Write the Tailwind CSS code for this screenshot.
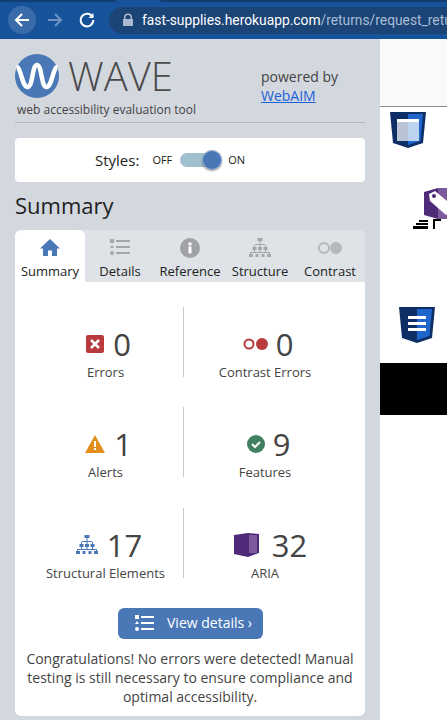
<!DOCTYPE html>
<html lang="en">
<head>
<meta charset="utf-8">
<title>WAVE</title>
<script src="https://cdn.jsdelivr.net/npm/@tailwindcss/browser@4"></script>
</head>
<body class="w-[447px] h-[720px] overflow-hidden bg-white font-['Open_Sans',sans-serif]">
<header class="h-[39px] bg-[#17539b] overflow-hidden">
  <div class="flex h-[2px]">
    <div class="w-[116px] bg-[#123d73] rounded-br-[2px]"></div>
    <div class="w-[44px]"></div>
    <div class="flex-1 bg-[#123d73] rounded-bl-[2px]"></div>
  </div>
  <div class="flex items-center h-[37px] pb-[1px]">
    <div class="w-7 h-7 ml-2 rounded-full bg-[#3a6ba9] flex items-center justify-center shrink-0">
      <svg width="16" height="16" viewBox="0 0 16 16" fill="none" stroke="#fff" stroke-width="2"><path d="M15 8H2M8 2 2 8l6 6"/></svg>
    </div>
    <svg class="ml-[11px] shrink-0" width="16" height="16" viewBox="0 0 16 16" fill="none" stroke="#6f92c0" stroke-width="2"><path d="M1 8h13M8 2l6 6-6 6"/></svg>
    <svg class="ml-[16px] shrink-0" width="16" height="16" viewBox="0 0 16 16" fill="none" stroke="#fff" stroke-width="2"><path d="M13.500 5A6.300 6.300 0 1 0 14.300 8"/><path d="M14.500 1v5h-5" fill="#fff" stroke="none"/></svg>
    <div class="ml-[14px] h-[27px] w-[400px] shrink-0 rounded-full bg-[#1b4477] flex items-center pl-[13px]">
      <svg width="12" height="14" viewBox="0 0 12 14" fill="#a9b9cf"><path d="M2 6V4.500a4 4 0 0 1 8 0V6h1v7H1V6zm1.500 0h5V4.500a2.500 2.500 0 0 0-5 0z"/></svg>
      <p class="ml-[8px] whitespace-nowrap font-['Roboto',sans-serif] text-[13.800px] leading-[27px] text-[#a9bdd6]"><span class="text-white">fast-supplies.herokuapp.com</span>/returns/request_retu</p>
    </div>
  </div>
</header>
<div class="flex h-[681px]">
  <aside class="w-[380px] shrink-0 bg-[#d3d7de] px-[15px] pt-[15px] text-[#444]">
    <div class="flex h-[69px] border-b border-[#b4b7bb]">
      <div class="w-[246px]">
        <div class="flex items-center h-[44px]">
          <svg width="44" height="44" viewBox="0 0 44 44"><circle cx="22" cy="22" r="22" fill="#4a78b6"/><path d="M1.500 13C6 13 7 33 12.500 33 18 33 17 11 22 11 27 11 26 33 31.500 33 37 33 38 13 42.500 13" fill="none" stroke="#fff" stroke-width="4.500"/></svg>
          <span class="ml-[9px] text-[40px] leading-[44px] font-light text-[#4a4a4a]">WAVE</span>
        </div>
        <p class="ml-[2px] mt-[3px] text-[12px] leading-[17px] whitespace-nowrap">web accessibility evaluation tool</p>
      </div>
      <div class="pt-[13px] text-[14px] leading-[19px]">
        <p>powered by</p>
        <a href="#" class="text-[#1a62d8] underline">WebAIM</a>
      </div>
    </div>
    <div class="mt-[15px] h-[44px] bg-white rounded-[4px] flex items-center pl-[80px] text-[#222]">
      <span class="text-[15px]">Styles:</span>
      <span class="ml-[13px] text-[11px]">OFF</span>
      <div class="relative ml-[8px] w-[40px] h-[14px] rounded-l-full bg-[#9fc0cd]">
        <div class="absolute -right-[2px] -top-[3px] w-5 h-5 rounded-full bg-[#4a78b6] shadow-[0_1px_2px_rgba(0,0,0,.4)] border border-white/40"></div>
      </div>
      <span class="ml-[8px] text-[11px]">ON</span>
    </div>
    <h2 class="mt-[7px] h-[41px] text-[22px] leading-[32px] text-[#222]">Summary</h2>
    <div class="bg-[#dfe2e7] rounded-t-[6px] grid grid-cols-5 h-[52px] text-[13px] text-[#222] text-center">
      <div class="bg-white rounded-t-[6px] pt-[8px]">
        <svg class="mx-auto" width="20" height="20" viewBox="0 0 20 20" fill="#4a78b6"><path d="M10 1 0 10.500h3V18h5v-5.500h4V18h5v-7.500h3z"/></svg>
        <p class="mt-[3px] leading-[20px]">Summary</p>
      </div>
      <div class="pt-[8px]">
        <svg class="mx-auto" width="20" height="20" viewBox="0 0 20 20" fill="#a4a6a9"><path d="M0 1h4v4H0zM6 2h14v2H6zM2 7l2 3H0zM6 8h14v2H6zM2 13a2 2 0 1 1 0 4 2 2 0 0 1 0-4zM6 14h14v2H6z"/></svg>
        <p class="mt-[3px] leading-[20px]">Details</p>
      </div>
      <div class="pt-[8px]">
        <svg class="mx-auto" width="20" height="20" viewBox="0 0 20 20"><circle cx="10" cy="10" r="10" fill="#a0a2a5"/><rect x="8.500" y="8.500" width="3" height="7" fill="#fff"/><rect x="8.500" y="4.500" width="3" height="3" fill="#fff"/></svg>
        <p class="mt-[3px] leading-[20px]">Reference</p>
      </div>
      <div class="pt-[8px]">
        <svg class="mx-auto" width="22" height="20" viewBox="0 0 22 20" fill="#a4a6a9"><path d="M8.500 0h5v3h-5zM10.500 3h1v3h-1zM6 6h10v1H6zM5 7h1v2H5zM16 7h1v2h-1zM10.500 7h1v2h-1zM3.500 9h4v3h-4zM9 9h4v3H9zM14.500 9h4v3h-4zM5 12h1v3H5zM16 12h1v3h-1zM10.500 12h1v3h-1zM1 14h20v1H1zM1 15h1v1H1zM20 15h1v1h-1zM0 16h4v3H0zM6.500 16h3v3h-3zM12.500 16h3v3h-3zM18 16h4v3h-4z"/></svg>
        <p class="mt-[3px] leading-[20px]">Structure</p>
      </div>
      <div class="pt-[8px]">
        <svg class="mx-auto" width="26" height="20" viewBox="0 0 26 20"><circle cx="7" cy="10" r="5" fill="none" stroke="#b6b8bb" stroke-width="2"/><circle cx="19" cy="10" r="6" fill="#b6b8bb"/></svg>
        <p class="mt-[3px] leading-[20px]">Contrast</p>
      </div>
    </div>
    <div class="bg-white h-[434px] rounded-b-[6px] pt-[25px] pl-[10px] text-[#444]">
      <div class="grid grid-cols-[160px_160px] gap-y-[30px] h-[271px]">
        <div class="h-[70px] w-[159px] border-r border-[#c8c8c8] text-center pt-[15px]">
          <div class="flex items-center justify-center gap-[9px] h-[44px] pl-[9px]">
            <svg width="18" height="18" viewBox="0 0 18 18"><rect width="18" height="18" rx="2" fill="#b83a3a"/><path d="M5 5l8 8M13 5l-8 8" stroke="#fff" stroke-width="2.500"/></svg>
            <span class="text-[31px] leading-[44px]">0</span>
          </div>
          <p class="-mt-[3px] pl-[3px] text-[13px] leading-[18px]">Errors</p>
        </div>
        <div class="h-[70px] text-center pt-[15px]">
          <div class="flex items-center justify-center gap-[7px] h-[44px] pl-[6px]">
            <svg width="26" height="14" viewBox="0 0 26 14"><circle cx="6" cy="7" r="4.500" fill="none" stroke="#b83a3a" stroke-width="2"/><circle cx="19" cy="7" r="6" fill="#b83a3a"/></svg>
            <span class="text-[31px] leading-[44px]">0</span>
          </div>
          <p class="-mt-[3px] text-[13px] leading-[18px]">Contrast Errors</p>
        </div>
        <div class="h-[70px] w-[159px] border-r border-[#c8c8c8] text-center pt-[15px]">
          <div class="flex items-center justify-center gap-[9px] h-[44px] pl-[9px]">
            <svg width="20" height="18" viewBox="0 0 20 18"><path d="M10 0l10 18H0z" fill="#e28f1d"/><rect x="9" y="6" width="2" height="6" fill="#fff"/><rect x="9" y="13" width="2" height="2" fill="#fff"/></svg>
            <span class="text-[31px] leading-[44px]">1</span>
          </div>
          <p class="-mt-[3px] pl-[3px] text-[13px] leading-[18px]">Alerts</p>
        </div>
        <div class="h-[70px] text-center pt-[15px]">
          <div class="flex items-center justify-center gap-[8px] h-[44px] pl-[7px]">
            <svg width="18" height="18" viewBox="0 0 18 18"><circle cx="9" cy="9" r="9" fill="#408061"/><path d="M5 9l3 3 5-5" fill="none" stroke="#fff" stroke-width="2"/></svg>
            <span class="text-[31px] leading-[44px]">9</span>
          </div>
          <p class="-mt-[3px] text-[13px] leading-[18px]">Features</p>
        </div>
        <div class="h-[70px] w-[159px] border-r border-[#c8c8c8] text-center pt-[15px]">
          <div class="flex items-center justify-center gap-[9px] h-[44px] pl-[10px]">
            <svg width="22" height="20" viewBox="0 0 22 20" fill="#4a78b6"><path d="M8.500 0h5v3h-5zM10.500 3h1v3h-1zM6 6h10v1H6zM5 7h1v2H5zM16 7h1v2h-1zM10.500 7h1v2h-1zM3.500 9h4v3h-4zM9 9h4v3H9zM14.500 9h4v3h-4zM5 12h1v3H5zM16 12h1v3h-1zM10.500 12h1v3h-1zM1 14h20v1H1zM1 15h1v1H1zM20 15h1v1h-1zM0 16h4v3H0zM6.500 16h3v3h-3zM12.500 16h3v3h-3zM18 16h4v3h-4z"/></svg>
            <span class="text-[31px] leading-[44px]">17</span>
          </div>
          <p class="-mt-[3px] pl-[3px] text-[13px] leading-[18px]">Structural Elements</p>
        </div>
        <div class="h-[70px] text-center pt-[15px]">
          <div class="flex items-center justify-center gap-[13px] h-[44px] pl-[11px]">
            <svg width="25" height="24" viewBox="0 0 25 24"><path d="M0 2 14 0l11 1v19l-11 4-14-3z" fill="#4e2a78"/><path d="M15 2h8v18h-8z" fill="#7c5a9c"/></svg>
            <span class="text-[31px] leading-[44px]">32</span>
          </div>
          <p class="-mt-[3px] text-[13px] leading-[18px]">ARIA</p>
        </div>
      </div>
      <a href="#" class="-ml-[10px] mt-[30px] translate-x-[103px] w-[145px] h-[31px] pb-[2px] rounded-[6px] bg-[#4a78b6] flex items-center pl-[17px] text-white text-[14px]">
        <svg width="19" height="16" viewBox="0 0 19 16" fill="#fff"><path d="M0 0h4v4H0zM6 1h13v2H6zM2 6l2 3H0zM6 7h13v2H6zM2 12a2 2 0 1 1 0 4 2 2 0 0 1 0-4zM6 13h13v2H6z"/></svg>
        <span class="ml-[13px]">View details ›</span>
      </a>
      <p class="-ml-[10px] mt-[10px] text-[14px] leading-[19px] text-center px-[4px]">Congratulations! No errors were detected! Manual testing is still necessary to ensure compliance and optimal accessibility.</p>
    </div>
  </aside>
  <main class="flex-1 overflow-hidden bg-white">
    <div class="h-[68px] bg-[#f9f9f9] border-b border-[#8c8c8c]"></div>
    <svg class="ml-[10px] mt-[5px]" width="36" height="36" viewBox="0 0 36 36"><path d="M0 0h36l-3 31-15 5-15-5z" fill="#0d2f66"/><path d="M18 2h15l-2.500 27L18 33z" fill="#1e66cc"/><rect x="7" y="7" width="22" height="22" fill="#b8c4d4"/><rect x="18" y="7" width="11" height="22" fill="#bcd3f0"/><rect x="7" y="7" width="22" height="3" fill="#fff"/></svg>
    <svg class="ml-[44px] mt-[40px]" width="34" height="31" viewBox="0 0 34 31"><path d="M0 4 14 0h20v31H14L0 27z" fill="#4e2a78"/><path d="M14 0h20v31H14z" fill="#7c5a9c"/><path d="M5 6l6-3 18 15-7 9L6 13z" fill="#fff"/><circle cx="10" cy="8" r="2" fill="#4e2a78"/></svg>
    <div class="ml-[33px] flex items-start gap-[5px]">
      <div class="w-[15px] flex flex-col items-end gap-[1px] pt-[1px]"><div class="h-[2px] w-[9px] bg-black"></div><div class="h-[2px] w-[12px] bg-black"></div><div class="h-[3px] w-[15px] bg-black"></div></div>
      <div class="w-[8px] h-[10px] border-t-2 border-l-2 border-black"></div>
    </div>
    <svg class="ml-[19px] mt-[78px]" width="36" height="36" viewBox="0 0 36 36"><path d="M0 0h36l-3 31-15 5-15-5z" fill="#0d2f66"/><path d="M18 2h15l-2.500 27L18 33z" fill="#1e66cc"/><path d="M9 9h18v3H9zM9 15h18v3H9zM9 21h18v3H9z" fill="#fff"/></svg>
    <div class="mt-[20px] h-[52px] bg-black"></div>
  </main>
</div>
</body>
</html>
